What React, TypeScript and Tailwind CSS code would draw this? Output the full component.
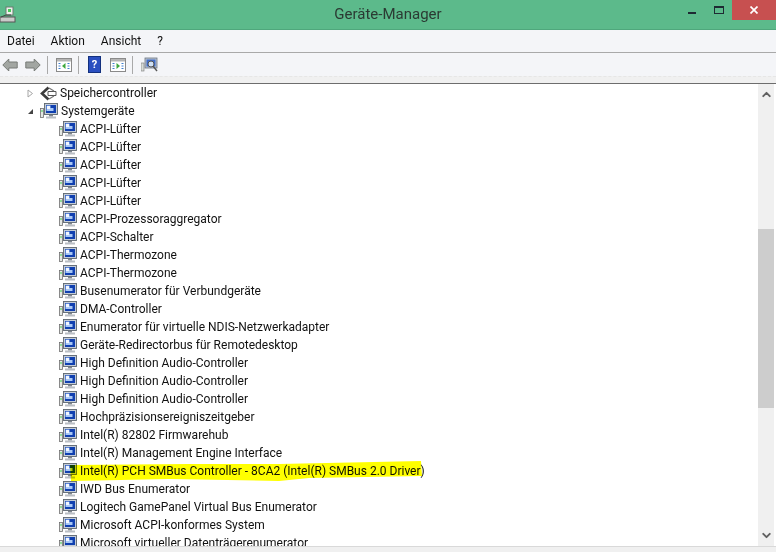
import { ChevronDown, ChevronUp } from 'lucide-react'

const rows = [
  'ACPI-Lüfter',
  'ACPI-Lüfter',
  'ACPI-Lüfter',
  'ACPI-Lüfter',
  'ACPI-Lüfter',
  'ACPI-Prozessoraggregator',
  'ACPI-Schalter',
  'ACPI-Thermozone',
  'ACPI-Thermozone',
  'Busenumerator für Verbundgeräte',
  'DMA-Controller',
  'Enumerator für virtuelle NDIS-Netzwerkadapter',
  'Geräte-Redirectorbus für Remotedesktop',
  'High Definition Audio-Controller',
  'High Definition Audio-Controller',
  'High Definition Audio-Controller',
  'Hochpräzisionsereigniszeitgeber',
  'Intel(R) 82802 Firmwarehub',
  'Intel(R) Management Engine Interface',
  'Intel(R) PCH SMBus Controller - 8CA2 (Intel(R) SMBus 2.0 Driver)',
  'IWD Bus Enumerator',
  'Logitech GamePanel Virtual Bus Enumerator',
  'Microsoft ACPI-konformes System',
  'Microsoft virtueller Datenträgerenumerator',
]

function DeviceIcon() {
  return (
    <svg width="18" height="16" viewBox="0 0 18 16" className="shrink-0">
      <rect x="0.5" y="5.5" width="3" height="9" fill="#e4e8e4" stroke="#6f6f6f" strokeWidth="0.8" />
      <rect x="1.5" y="7" width="1" height="2" fill="#3fd050" />
      <rect x="4.5" y="0.5" width="13" height="11" fill="#c3ccd8" stroke="#5d6670" strokeWidth="0.9" />
      <rect x="6" y="2" width="10" height="8" fill="#1040b0" />
      <path d="M6.5 2.5h4v2.5h3v3h-7z" fill="#a9c8f5" />
      <path d="M7 3h3v3H7z" fill="#f2f7ff" />
      <rect x="9" y="12" width="4" height="1.5" fill="#7f868e" />
      <rect x="6" y="13.5" width="10" height="2" fill="#b9bec4" />
    </svg>
  )
}

function ArrowIcon({ flip }: { flip?: boolean }) {
  return (
    <svg width="16" height="14" viewBox="0 0 16 14" className={flip ? '-scale-x-100' : ''}>
      <path d="M0.8 7l6-6v3h8.4v6H6.8v3z" fill="#a2a6a2" stroke="#777b77" strokeWidth="1" />
    </svg>
  )
}

function PanelIcon({ right }: { right?: boolean }) {
  return (
    <svg width="16" height="14" viewBox="0 0 16 14">
      <rect x="0.5" y="0.5" width="15" height="13" fill="#fff" stroke="#8a8a8a" />
      <rect x="1" y="1" width="14" height="2.5" fill="#b5b5b5" />
      <path d="M2.5 5.5h2M2.5 8h2M2.5 10.5h2M11.5 5.5h2M11.5 8h2M11.5 10.5h2" stroke="#3f7fd0" strokeWidth="1" />
      <path d={right ? 'M6.5 5v6l3.5-3z' : 'M9.5 5v6L6 8z'} fill="#3fa83f" />
    </svg>
  )
}

export default function App() {
  return (
    <div className="flex h-[552px] w-[776px] flex-col overflow-hidden bg-white font-['Roboto',sans-serif] text-[12px] text-[#111]">
      {/* Title bar */}
      <div className="relative flex h-[30px] shrink-0 items-center justify-center border-b border-[#4fa77c] bg-[#5cba8b]">
        <svg width="16" height="18" viewBox="0 0 16 18" className="absolute left-0 top-[6px]">
          <rect x="6" y="1" width="7" height="8" fill="#eef2ee" stroke="#6b7a70" />
          <rect x="8" y="3" width="3" height="3" fill="#49c95a" />
          <rect x="0" y="11" width="15" height="5" fill="#c9cbc9" stroke="#555" />
          <path d="M1 11l5-2h5" fill="none" stroke="#444" />
        </svg>
        <span className="text-[15px] text-[#2b3a33]">Geräte-Manager</span>
        <div className="absolute right-[52px] top-[6px] flex items-end gap-[18px]">
          <div className="h-[2px] w-[8px] bg-[#1e2a33]" />
          <div className="h-[8px] w-[10px] border border-t-2 border-[#1e2a33]" />
        </div>
        <div className="absolute right-0 top-0 flex h-[20px] w-[44px] items-center justify-center bg-[#c75050]">
          <svg width="8" height="8" viewBox="0 0 8 8">
            <path d="M0.5 0.5l7 7M7.5 0.5l-7 7" stroke="#fff" strokeWidth="1.7" />
          </svg>
        </div>
      </div>

      {/* Menu */}
      <div className="flex h-[23px] shrink-0 items-center gap-[16px] border-b border-[#a9a9a9] bg-[#f4f5f8] pl-[7px]">
        <span>Datei</span>
        <span>Aktion</span>
        <span>Ansicht</span>
        <span>?</span>
      </div>

      {/* Toolbar */}
      <div className="flex h-[23px] shrink-0 items-center bg-[#f4f5f8] pl-[2px]">
        <ArrowIcon />
        <div className="ml-[7px]">
          <ArrowIcon flip />
        </div>
        <div className="ml-[6px] h-[18px] w-px bg-[#a9a9a9]" />
        <div className="ml-[8px]">
          <PanelIcon />
        </div>
        <div className="ml-[6px] h-[18px] w-px bg-[#a9a9a9]" />
        <div className="ml-[9px] flex h-[17px] w-[13px] items-center justify-center border border-[#12307e] bg-[#2a4fc0] text-[11px] font-bold leading-none text-white">
          ?
        </div>
        <div className="ml-[9px]">
          <PanelIcon right />
        </div>
        <div className="ml-[6px] h-[18px] w-px bg-[#a9a9a9]" />
        <svg width="18" height="16" viewBox="0 0 18 16" className="ml-[8px]">
          <rect x="0" y="6" width="3" height="8" fill="#d8dcd8" stroke="#777" strokeWidth="0.6" />
          <rect x="4" y="1" width="12" height="10" fill="#b8c2d0" stroke="#6b7480" strokeWidth="0.8" />
          <rect x="5.5" y="2.5" width="9" height="7" fill="#3f6cc8" />
          <circle cx="10" cy="7" r="3" fill="#cfe0f5" stroke="#555" />
          <path d="M12 9l4 5" stroke="#555" strokeWidth="1.4" />
        </svg>
      </div>

      {/* Strip under the toolbar */}
      <div className="h-[7px] shrink-0 border-t border-dashed border-[#e6e6e6] bg-[#f0f0f0]" />
      <div className="h-[1px] shrink-0 bg-[#6d6d6d]" />

      <div className="flex min-h-0 flex-1">
        {/* Tree */}
        <div className="min-w-0 flex-1 overflow-hidden">
          <div className="flex h-[18px] items-center pl-[27px]">
            <svg width="7" height="9" viewBox="0 0 7 9" className="shrink-0">
              <path d="M1 1l4.5 3.5L1 8z" fill="#fff" stroke="#a6a6a6" />
            </svg>
            <svg width="17" height="15" viewBox="0 0 17 15" className="ml-[6px] shrink-0">
              <path d="M8.5 1.5L2 7.5l6.5 6" fill="none" stroke="#3c3c3c" strokeWidth="2.6" />
              <path d="M8 5.5h8v4H8z" fill="#fff" stroke="#555" />
              <path d="M9 2l5 3M9 13l5-3" stroke="#777" strokeWidth="1.2" />
            </svg>
            <span className="ml-[3px]">Speichercontroller</span>
          </div>
          <div className="flex h-[18px] items-center pl-[27px]">
            <svg width="7" height="7" viewBox="0 0 7 7" className="shrink-0">
              <path d="M6 1v5H1z" fill="#444" />
            </svg>
            <div className="ml-[6px] flex">
              <DeviceIcon />
            </div>
            <span className="ml-[3px]">Systemgeräte</span>
          </div>
          {rows.map((label, i) => (
            <div key={i} className="relative flex h-[18px] items-center pl-[59px]">
              <DeviceIcon />
              <span className="ml-[3px] whitespace-nowrap">{label}</span>
              {label.startsWith('Intel(R) PCH') && (
                <svg width="354" height="22" viewBox="0 0 354 22" className="absolute left-[69px] top-[-2px] mix-blend-multiply">
                  <path d="M1 5L120 4L210 4L352 1L353 16L240 18L210 21L100 19L2 21z" fill="#ffff00" />
                </svg>
              )}
            </div>
          ))}
        </div>

        {/* Scrollbar */}
        <div className="mr-[2px] flex w-[16px] shrink-0 flex-col items-center bg-[#f0f0f0]">
          <ChevronUp size={13} strokeWidth={3.5} className="mt-[4px] shrink-0 text-[#606060]" />
          <div className="mt-[128px] h-[179px] w-full shrink-0 bg-[#cdcdcd]" />
          <div className="flex-1" />
          <ChevronDown size={13} strokeWidth={3.5} className="mb-[4px] shrink-0 text-[#606060]" />
        </div>
      </div>

      {/* Status bar */}
      <div className="h-[6px] shrink-0 border-t border-[#d9d9d9] bg-[#f0f0f0]" />
    </div>
  )
}
